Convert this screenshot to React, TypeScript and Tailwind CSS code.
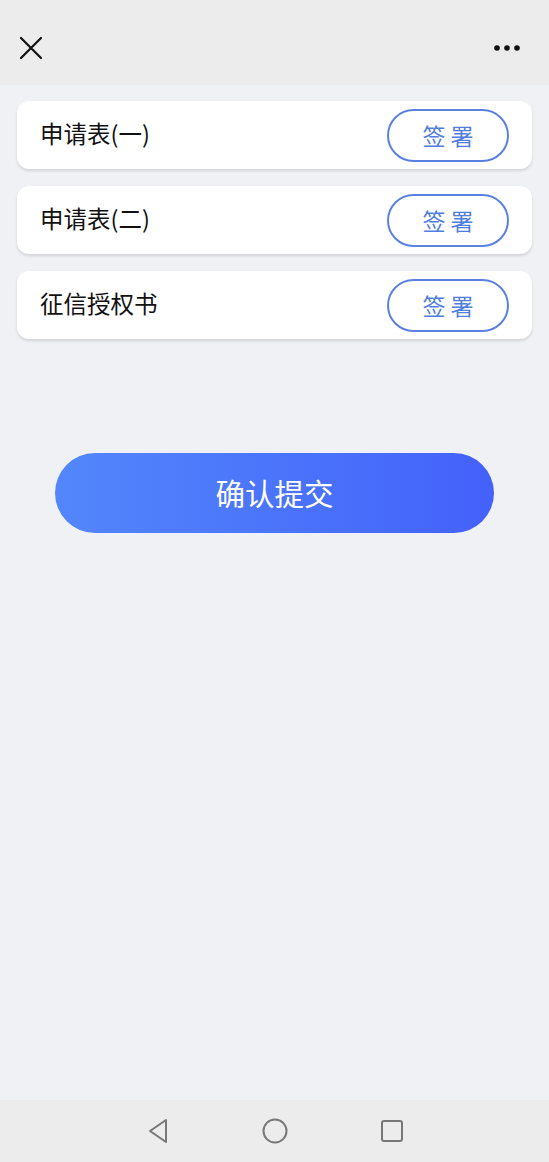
import React from "react";

const font = { fontFamily: '"Noto Sans CJK SC", "Noto Sans", sans-serif' };

function Card({ title }: { title: string }) {
  return (
    <div className="flex h-[68px] items-center justify-between rounded-[12px] bg-white pl-[23px] pr-[23px] shadow-[0_2px_3px_rgba(0,0,0,0.12)]">
      <span className="pb-[3px] text-[23.5px] leading-none text-[#111]">{title}</span>
      <button className="flex h-[53px] w-[122px] items-center justify-center rounded-full border-2 border-[#5a80e2] text-[23px] leading-none text-[#4f7ee0]">
        签 署
      </button>
    </div>
  );
}

export default function App() {
  return (
    <div className="flex h-[1162px] w-[549px] flex-col bg-[#f0f1f5]" style={font}>
      <div className="flex h-[85px] shrink-0 items-center justify-between bg-[#ececec] pl-[19px] pr-[28px] pt-[10px]">
        <svg width="24" height="24" viewBox="0 0 24 24">
          <path d="M2 2 L22 22 M22 2 L2 22" stroke="#111" strokeWidth="2.2" strokeLinecap="round" />
        </svg>
        <svg width="28" height="8" viewBox="0 0 28 8">
          <circle cx="4" cy="4" r="2.8" fill="#111" />
          <circle cx="14" cy="4" r="2.8" fill="#111" />
          <circle cx="24" cy="4" r="2.8" fill="#111" />
        </svg>
      </div>
      <div className="flex flex-col gap-[17px] px-[17px] pt-[16px]">
        <Card title="申请表(一)" />
        <Card title="申请表(二)" />
        <Card title="征信授权书" />
      </div>
      <div className="mt-[114px] px-[55px]">
        <button className="flex h-[80px] w-full items-center justify-center rounded-full bg-gradient-to-r from-[#5386fb] to-[#4461fa] pb-[2px] text-[29.5px] text-white">
          确认提交
        </button>
      </div>
      <div className="flex-1" />
      <div className="flex h-[62px] shrink-0 items-center justify-center bg-[#ececec]">
        <div className="flex w-[117px] justify-center">
          <svg width="22" height="26" viewBox="0 0 22 26">
            <path d="M19 2 L3 13 L19 24 Z" fill="none" stroke="#777" strokeWidth="2" strokeLinejoin="round" />
          </svg>
        </div>
        <div className="flex w-[117px] justify-center">
          <svg width="26" height="26" viewBox="0 0 26 26">
            <circle cx="13" cy="13" r="11.5" fill="none" stroke="#777" strokeWidth="2" />
          </svg>
        </div>
        <div className="flex w-[117px] justify-center">
          <svg width="24" height="24" viewBox="0 0 24 24">
            <rect x="2" y="2" width="20" height="20" rx="2" fill="none" stroke="#777" strokeWidth="2" />
          </svg>
        </div>
      </div>
    </div>
  );
}
